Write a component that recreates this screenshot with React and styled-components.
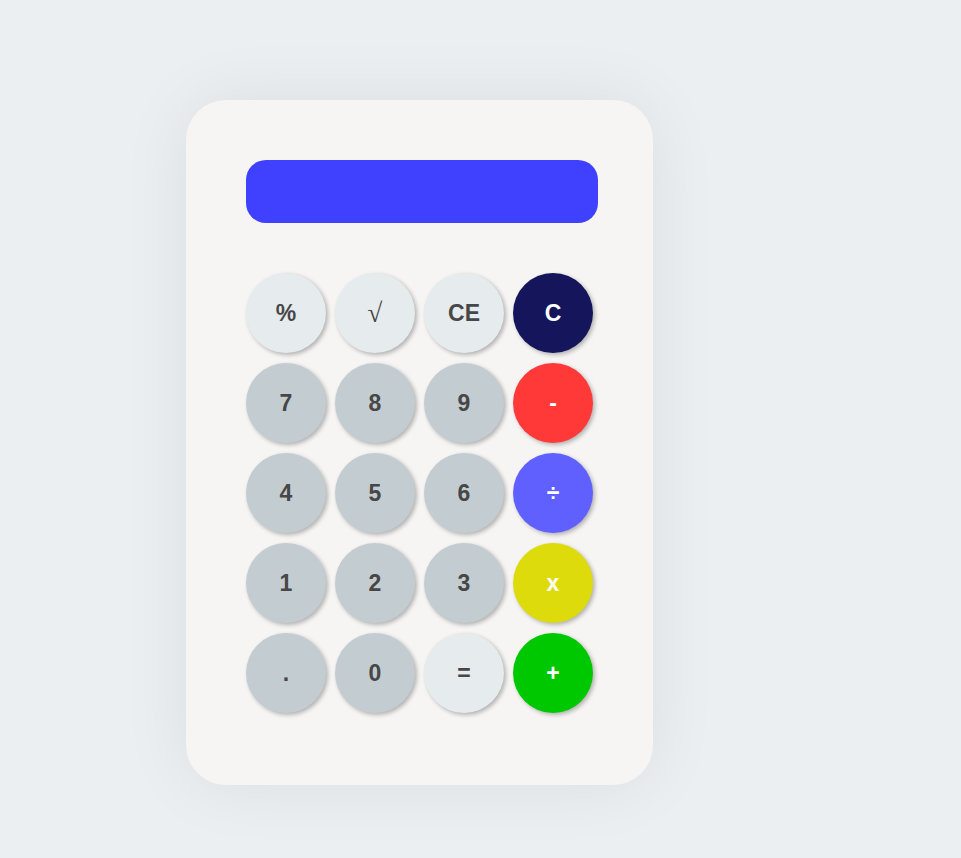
import React from "react";
import styled, { createGlobalStyle } from "styled-components";

const GlobalStyle = createGlobalStyle`
  html, body {
    margin: 0;
    padding: 0;
    background: #eceff1;
    font-family: "Liberation Sans", Arial, sans-serif;
  }
`;

const Page = styled.div`
  min-height: 858px;
  padding: 100px 0 0 186px;
  box-sizing: border-box;
`;

const Card = styled.div`
  width: 467px;
  height: 685px;
  box-sizing: border-box;
  padding: 60px 55px 0 60px;
  background: #f6f5f4;
  border-radius: 40px;
  box-shadow: 0 0 70px rgba(0, 0, 0, 0.07);
`;

const Screen = styled.div`
  height: 63px;
  background: #4040ff;
  border-radius: 20px;
  margin-bottom: 50px;
`;

const Keys = styled.div`
  display: grid;
  grid-template-columns: repeat(4, 80px);
  column-gap: 9px;
  row-gap: 10px;
`;

const Key = styled.button`
  width: 80px;
  height: 80px;
  border: none;
  outline: none;
  border-radius: 50%;
  padding: 0;
  cursor: pointer;
  font-family: ${(p) =>
    p.$serif ? '"Liberation Serif", "Times New Roman", serif' : '"Liberation Sans", Arial, sans-serif'};
  font-weight: ${(p) => (p.$serif ? "normal" : "bold")};
  font-size: ${(p) => (p.$serif ? "27px" : "23px")};
  background: ${(p) => p.$bg || "#c3cdd1"};
  color: ${(p) => p.$fg || "#474747"};
  box-shadow: 2px 2px 4px rgba(0, 0, 0, 0.28);
  display: flex;
  align-items: center;
  justify-content: center;
`;

const keys = [
  { t: "%", bg: "#e6ebee" },
  { t: "√", bg: "#e6ebee", serif: true },
  { t: "CE", bg: "#e6ebee" },
  { t: "C", bg: "#14155a", fg: "#ffffff" },
  { t: "7" },
  { t: "8" },
  { t: "9" },
  { t: "-", bg: "#ff3838", fg: "#ffffff" },
  { t: "4" },
  { t: "5" },
  { t: "6" },
  { t: "÷", bg: "#5f60ff", fg: "#ffffff" },
  { t: "1" },
  { t: "2" },
  { t: "3" },
  { t: "x", bg: "#dddb0c", fg: "#ffffff" },
  { t: "." },
  { t: "0" },
  { t: "=", bg: "#e6ebee" },
  { t: "+", bg: "#00c800", fg: "#ffffff" },
];

export default function App() {
  return (
    <Page>
      <GlobalStyle />
      <Card>
        <Screen />
        <Keys>
          {keys.map((k) => (
            <Key key={k.t} $bg={k.bg} $fg={k.fg} $serif={k.serif}>
              {k.t}
            </Key>
          ))}
        </Keys>
      </Card>
    </Page>
  );
}
